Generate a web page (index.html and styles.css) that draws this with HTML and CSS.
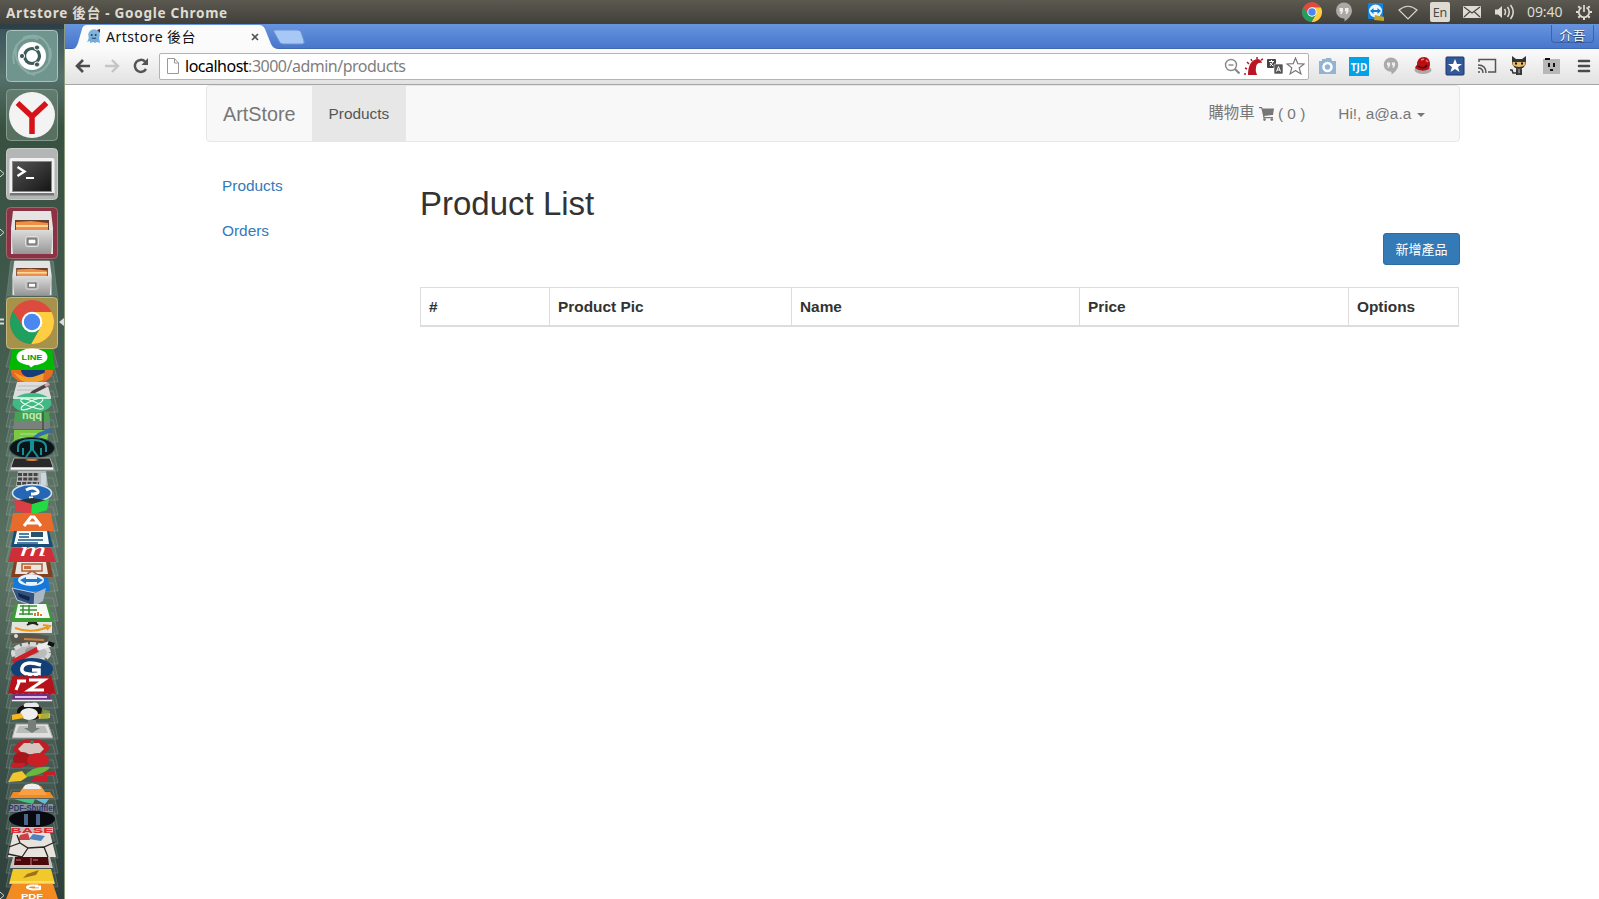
FILE: index.html
```html
<!DOCTYPE html>
<html lang="zh-Hant">
<head>
<meta charset="utf-8">
<title>Artstore 後台</title>
<link rel="stylesheet" href="styles.css">
</head>
<body>
<svg width="0" height="0" class="defs">
  <defs>
    <symbol id="chrome" viewBox="-22 -22 44 44">
      <circle r="22" fill="#dd4b3e"/>
      <path d="M0-10H19.6A22 22 0 0 1-1 22L8.7 5Z" fill="#ffcd40"/>
      <path d="M-19-11L-8.7 5L0 10L8.7 5L-1 22A22 22 0 0 1-19-11Z" fill="#1fa05f"/>
      <circle r="10.3" fill="#fff"/><circle r="8.2" fill="#4a87ee"/>
    </symbol>
    <symbol id="quote" viewBox="0 0 20 20">
      <path d="M10 .5a8 8 0 0 1 8 8c0 5-4 8.500-7.500 11V16.500H10a8 8 0 0 1 0-16Z"/>
      <path d="M5.500 6h3.500v3.500L7.500 12H6l1-2.500H5.500ZM11 6h3.500v3.500L13 12h-1.500l1-2.500H11Z" fill="#eee"/>
    </symbol>
    <linearGradient id="cab" x2="0" y2="1"><stop stop-color="#dcdcdc"/><stop offset="1" stop-color="#969696"/></linearGradient>
    <linearGradient id="dark" x2="1" y2="1"><stop stop-color="#555"/><stop offset="1" stop-color="#151515"/></linearGradient>
    <linearGradient id="wall" x2="0" y2="1"><stop stop-color="#39515a"/><stop offset=".06" stop-color="#56716a"/><stop offset=".12" stop-color="#38503f"/><stop offset=".3" stop-color="#40584b"/><stop offset=".5" stop-color="#4c6557"/><stop offset=".62" stop-color="#5b7263"/><stop offset=".8" stop-color="#3d5249"/><stop offset="1" stop-color="#2d403c"/></linearGradient>
  </defs>
</svg>

<header class="panel">
  <div class="panel-title">Artstore 後台 - Google Chrome</div>
  <div class="panel-tray">
    <svg width="20" height="20"><use href="#chrome"/></svg>
    <svg width="20" height="20" fill="#aaa9a6"><use href="#quote"/></svg>
    <svg width="20" height="20" viewBox="0 0 20 20"><rect x="2" y="1" width="15" height="16" rx="1" fill="#1483df"/><circle cx="9.500" cy="9" r="6.500" fill="#eaf5ff"/><path d="M4 9l3.500-3v2h4V6L15 9l-3.500 3v-2h-4v2Z" fill="#1878cc"/><path d="M9 13l9 2v4l-10-1Z" fill="#c6a32b"/></svg>
    <svg width="20" height="20" viewBox="0 0 20 20" fill="none" stroke="#d8d5cc" stroke-width="1.200"><path d="M1 8Q10 .5 19 8L10 17Z"/></svg>
    <span class="lang">En</span>
    <svg width="20" height="20" viewBox="0 0 20 20"><rect x="1" y="4" width="18" height="12" rx="1" fill="#dfdbd2"/><path d="M2 5l8 6 8-6M2 15l6-5.500M18 15l-6-5.500" fill="none" stroke="#4a4944" stroke-width="1.200"/></svg>
    <svg width="22" height="20" viewBox="0 0 22 20"><path d="M1 7.500h3l4-3.500v12l-4-3.500H1Z" fill="#dfdbd2"/><path d="M10.500 7q2 3 0 6M13.500 5q3.500 5 0 10M16.500 3q5.500 7 0 14" fill="none" stroke="#dfdbd2" stroke-width="1.500"/></svg>
    <span class="clock">09:40</span>
    <svg width="20" height="20" viewBox="-10 -10 20 20" fill="none" stroke="#dfdbd2"><path d="M-2.500-4.500A5.200 5.200 0 1 0 2.500-4.500M0-7V0" stroke-width="1.700"/><path d="M-8 0h2.500M8 0h-2.500M0 8V5.500M-5.700 5.700l1.700-1.700M5.700 5.700L4 4M-5.700-5.700l1.500 1.500M5.700-5.700L4.200-4.200" stroke-width="2"/></svg>
  </div>
</header>

<div class="desktop">
<aside class="launcher">
<svg width="65" height="875" viewBox="0 24 65 875" font-family="Liberation Sans, sans-serif" font-weight="bold" text-anchor="middle">
  <rect y="24" width="65" height="875" fill="url(#wall)"/>
  <rect y="24" width="65" height="5" fill="#26343a" opacity=".6"/>
  <path d="M64.500 24V899" stroke="#8d9a78"/>
  <!-- folded tile edges -->
  <g fill="#fff" fill-opacity=".07" stroke="#c8d6cf" stroke-opacity=".22">
    <path d="M11 261H53L58 300H6ZM11 349H53L58 367H6ZM11 362H53L58 382H6ZM11 376H53L58 397H6ZM11 391H53L58 412H6ZM11 405H53L58 427H6ZM11 420H53L58 442H6ZM11 434H53L58 456H6ZM11 449H53L58 471H6ZM11 463H53L58 486H6ZM11 478H53L58 500H6ZM11 492H53L58 515H6ZM11 507H53L58 531H6ZM11 524H53L58 547H6ZM11 540H53L58 562H6ZM11 554H53L58 576H6ZM11 569H53L58 591H6ZM11 583H53L58 606H6ZM11 598H53L58 621H6ZM11 613H53L58 634H6ZM11 627H53L58 648H6ZM11 642H53L58 664H6ZM11 656H53L58 679H6ZM11 671H53L58 694H6ZM11 685H53L58 708H6ZM11 700H53L58 723H6ZM11 715H53L58 739H6ZM11 730H53L58 754H6ZM11 745H53L58 768H6ZM11 760H53L58 783H6ZM11 775H53L58 799H6ZM11 790H53L58 814H6ZM11 805H53L58 829H6ZM11 820H53L58 844H6ZM11 835H53L58 858H6ZM11 850H53L58 873H6ZM11 863H53L58 887H6Z"/>
  </g>
  <!-- dash -->
  <rect x="6.500" y="30.500" width="51" height="51" rx="4" fill="#70958f" stroke="#a9c4c0"/>
  <path d="M14 64C10 44 25 34 38 39M50 48C54 62 43 76 27 73M23 38C40 31 53 43 49 61M17 44C12 60 22 72 35 75" fill="none" stroke="#a7c5c0" stroke-width="2" opacity=".5"/>
  <circle cx="32" cy="56" r="14" fill="#fff"/>
  <circle cx="32" cy="56" r="7.500" fill="none" stroke="#3d5b57" stroke-width="3.200"/>
  <g fill="#3d5b57" stroke="#fff"><circle cx="22" cy="56" r="2.600"/><circle cx="37" cy="47.500" r="2.600"/><circle cx="37" cy="64.500" r="2.600"/></g>
  <!-- browser -->
  <rect x="6.500" y="89.500" width="51" height="51" rx="4" fill="#788f82" fill-opacity=".5" stroke="#849a8f"/>
  <circle cx="32" cy="115" r="23" fill="#f3f3f3"/>
  <path d="M17.500 103L32 116.500L46.500 103M32 115V134" fill="none" stroke="#d7131a" stroke-width="5.500"/>
  <!-- terminal -->
  <rect x="6.500" y="148.500" width="51" height="51" rx="4" fill="#b4b6b5" stroke="#c9cbca"/>
  <rect x="9.500" y="158" width="45" height="37" rx="2" fill="#f1f1f1"/><path d="M10 193h44v2.500H10Z" fill="#777"/>
  <rect x="12.500" y="161.500" width="39" height="30" fill="url(#dark)" stroke="#888"/>
  <path d="M17.500 167l7 4.500-7 4.500" fill="none" stroke="#fff" stroke-width="2.400"/><path d="M26 178h8" stroke="#fff" stroke-width="2"/>
  <!-- files -->
  <rect x="6.500" y="207.500" width="51" height="51" rx="4" fill="#8b3345" stroke="#a96572"/>
  <g id="cabinet"><path d="M13 211H51L53 228V254H11V228Z" fill="#e4e4e4"/><path d="M15 220H49V230H15Z" fill="#69402c"/><path d="M16 222l15-1 17 2v8H16Z" fill="#ed8f44"/><path d="M16 226h32" stroke="#ffd79b" stroke-width="2"/><path d="M11 230H53L51 254H13Z" fill="url(#cab)"/><rect x="25.500" y="236.500" width="13" height="10" rx="2" fill="#aaa" stroke="#e2e2e2"/><rect x="28" y="239" width="8" height="5" fill="#fff" stroke="#555"/></g>
  <path d="M10 261H54L57 296H7Z" fill="#668075" opacity=".6"/>
  <use href="#cabinet" transform="matrix(.93 0 0 .8 2.240 92)"/>
  <!-- chrome -->
  <rect x="6.500" y="297.500" width="51" height="51" rx="4" fill="#a6924a" stroke="#c6b97d"/>
  <use href="#chrome" x="10" y="300" width="44" height="44"/>
  <!-- folded stack -->
  <ellipse cx="32" cy="371" rx="21" ry="13" fill="#e76b20"/><ellipse cx="33" cy="370" rx="12" ry="8" fill="#173c79"/><path d="M14 372q12 8 22 4l8-3-1 7-12 4q-13-3-17-12Z" fill="#f0a02a"/>
  <path d="M12 349.500H52L55 370H9Z" fill="#00b900"/><ellipse cx="32" cy="357" rx="15.500" ry="8.500" fill="#fff"/><path d="M27 363l4 4.500 8-6" fill="#fff"/><text x="32" y="360" font-size="7.500" textLength="21" lengthAdjust="spacingAndGlyphs" fill="#00a000">LINE</text>
  <path d="M17 382H47L51 397H13Z" fill="#ddd"/><path d="M18 386H42M17 390H41" stroke="#bbb"/><path d="M29 394l3-3 13-7 4 2-14 7Z" fill="#444"/><path d="M44 385l4-3 2 3-4 2" fill="#d7a0a4"/>
  <ellipse cx="32" cy="403" rx="19.500" ry="10" fill="#42b883"/><path d="M13 398H51" stroke="#c5e9d7" stroke-width="2"/><g fill="none" stroke="#e5fff2"><ellipse cx="32" cy="404" rx="12" ry="3" transform="rotate(20 32 404)"/><ellipse cx="32" cy="404" rx="12" ry="3" transform="rotate(-25 32 404)"/></g>
  <path d="M15 412H49L50 421H14Z" fill="#49a253"/><text x="32" y="419" font-size="10" fill="#bfe9bd" textLength="20" lengthAdjust="spacingAndGlyphs">nqq</text><path d="M14 421H50V429H13Z" fill="#7a807c"/><path d="M43 412V430" stroke="#333"/>
  <path d="M14 430H49L47 441H18L10 445L14 439Z" fill="#7bc843"/><path d="M20 434H39M19 438H34" stroke="#aee582"/><path d="M33 437l5-4 12-5 2 4-14 5Z" fill="#356da8"/>
  <ellipse cx="32" cy="448" rx="22.500" ry="10.500" fill="#0b1518" stroke="#314c50"/><path d="M18 452V447q0-7 13-7v10l-5 7M46 452V447q0-7-13-7v10l5 7M23 455v-7M41 455v-7" fill="none" stroke="#168f96" stroke-width="2"/>
  <path d="M14 458H50L54 470H10Z" fill="#292929" stroke="#aaa"/><path d="M11 468.500H53" stroke="#f5f5f5" stroke-width="2.500"/><path d="M25 460q7 2 14 0l-4-1h-7Z" fill="#e28637"/>
  <path d="M18 471H46L48 486H16Z" fill="#b5b8b7"/><path d="M18 474.500H39M18 479H39M17 483.500H39" stroke="#444" stroke-width="2.800" stroke-dasharray="4 1.200"/><path d="M41 473h5v12h-5Z" fill="#c7d8df"/>
  <ellipse cx="32" cy="493" rx="19.500" ry="8.500" fill="#2566b5" stroke="#d7e2ef" stroke-width="1.500"/><path d="M26 490q7-4 11 0t-6 4M29 498h4" stroke="#fff" stroke-width="3" fill="none"/>
  <path d="M14 499L32 504L31 515L16 511Z" fill="#dc3e45"/><path d="M32 504L49 499L47 510L31 515Z" fill="#22da43"/><path d="M18 500L32 498L46 500L32 504Z" fill="#2b322f"/>
  <path d="M13 513H51L54 531H10Z" fill="#e86b2b"/><path d="M24 526L31 517h3l7 9M26 523H39" fill="none" stroke="#fff" stroke-width="3"/>
  <path d="M14 531H49L53 547H11Z" fill="#164d78"/><path d="M17 531H47L49 544H14Z" fill="#f5fafc"/><path d="M19 534H29M19 537H29M18 540H43M17 543H38" stroke="#1b5684" stroke-width="1.500"/><path d="M31 532h12v5H31Z" fill="#28516c"/>
  <path d="M12 548H51L56 562H8Z" fill="#d02e36"/><text x="33" y="556" font-family="Liberation Serif, serif" font-style="italic" font-weight="400" font-size="19" textLength="27" lengthAdjust="spacingAndGlyphs" fill="#fff">m</text>
  <path d="M14 562H50L53 577H11Z" fill="#843e20"/><path d="M17 562H46L48 574H15Z" fill="#e9e6df"/><path d="M22 564h20v7H22ZM27 574l5-3 5 3" stroke="#ae6138" stroke-width="1.500" fill="none"/><path d="M24 566h7v3h-7Z" fill="#cf6d3e"/>
  <path d="M14 578H48L50 591H13Z" fill="#1678d9"/><ellipse cx="31" cy="580" rx="13" ry="6" fill="#e7f4ff"/><path d="M20 580l6-3v2h11v-2l6 3-6 4v-2H26v2Z" fill="#2176c6"/>
  <path d="M12 588L35 593L34 606L17 600Z" fill="#35517e" stroke="#bcccdd"/><path d="M35 593L46 588L43 601L34 606Z" fill="#aab7c5"/><path d="M18 593l12 4-1 4-10-4Z" fill="#102949"/>
  <path d="M15 604H48L53 621H11Z" fill="#3a9c36"/><path d="M18 604H46L50 618H15Z" fill="#f5faf3"/><path d="M20 606h17M20 610h17M19 614h17M23 605v10M29 605v10" stroke="#359134" stroke-width="1.500"/><path d="M33 611h10v6H33Z" fill="#fff"/><path d="M35 616v-3M38 616v-4M41 616v-2" stroke="#df792d" stroke-width="2"/>
  <path d="M12 622H52V633H11Z" fill="#e4e4df"/><path d="M27 625q6-4 11 0M28 623h9" fill="none" stroke="#26231f" stroke-width="2"/><path d="M15 628q16 6 33-1M43 625l7 1-3 4" fill="none" stroke="#ef961d" stroke-width="2"/>
  <path d="M10 635q14-4 39 1l-2 7H12Z" fill="#5a554b"/><circle cx="16" cy="636" r="2" fill="#ddd"/><path d="M24 639l20 1" stroke="#cf8036" stroke-width="2"/>
  <ellipse cx="31" cy="653" rx="18" ry="9" fill="#bbb" stroke="#d9d9d9" stroke-width="4" stroke-dasharray="6 2"/><ellipse cx="32" cy="651" rx="7" ry="4" fill="#999"/><path d="M13 662L38 649" stroke="#cb2025" stroke-width="5"/><path d="M37 648L50 644" stroke="#ececec" stroke-width="6"/><path d="M48 643l6 2" stroke="#111" stroke-width="4"/>
  <ellipse cx="32" cy="669" rx="21" ry="11" fill="#123f77"/><path d="M41 665q-17-5-19 3t17 6v-4h-7" fill="none" stroke="#fff" stroke-width="3.500"/>
  <path d="M12 677l3-2 3 2 3-2 3 2 3-2 3 2 3-2 3 2 3-2 3 2 3-2 3 2 3-2L56 695l-3-2-3 2-3-2-3 2-3-2-3 2-3-2-3 2-3-2-3 2-3-2-3 2-3-2-3 2-3-2L8 694Z" fill="#b51219"/><path d="M17 681h9M20 680l-4 10M29 680h15L29 690h15" fill="none" stroke="#fff" stroke-width="3"/>
  <path d="M13 694H49L52 701H12Z" fill="#713187"/><path d="M15 697H47" stroke="#dfc0e9" stroke-width="2"/><path d="M12 700.500H52" stroke="#eee" stroke-width="1.500"/>
  <ellipse cx="30" cy="712" rx="13" ry="8" fill="#111"/><ellipse cx="29" cy="714" rx="9" ry="6" fill="#eee"/><path d="M24 707q-2-5 7-4 8-2 8 4Z" fill="#e9e9e9"/><path d="M12 715l9-2 3 5-12 2ZM38 714l12-1v5l-11 1Z" fill="#f5b71e"/><path d="M42 709l8 2-2 8h-8Z" fill="#8da847" opacity=".7"/>
  <path d="M16 724H48L53 738H12Z" fill="#dfdfdf" stroke="#9c9c9c"/><path d="M19 726H45L48 733H16Z" fill="#b8bbb8"/><path d="M28 720h8v8h4l-8 5-8-5h4Z" fill="#777d7b"/>
  <path d="M13 750q4-11 19-11t18 10l-6 5H18Z" fill="#bd1f27"/><path d="M18 749l6-6h15l5 6-5 5H23Z" fill="#d6c4bf"/><circle cx="32" cy="742" r="2" fill="#467a6d"/>
  <ellipse cx="22" cy="759" rx="9" ry="7" fill="#a5171d"/><ellipse cx="38" cy="760" rx="11" ry="7" fill="#ca2025"/>
  <path d="M11 763h15l-4 5H12ZM35 776h8v-5h12v4h-8v7H31Z" fill="#c81e27"/><path d="M24 777q8-12 26-10-4 7-24 10Z" fill="#67b83d"/><path d="M8 782l5-9 9-2 5 6-6 4Z" fill="#f1c52f"/>
  <path d="M13 792H50L54 798H10Z" fill="#f28a21"/><path d="M24 786H41L47 795H18Z" fill="#f7a144"/><path d="M25 785q7-3 14 0l2 4H23Z" fill="#eee"/>
  <path d="M14 799h21l-2 5-9-2Z" fill="#44c183"/><path d="M35 799h14l-4 5Z" fill="#62bfd7"/><path d="M11 804H53V812H9Z" fill="#aab4bd" opacity=".6"/>
  <ellipse cx="32" cy="819" rx="23" ry="8.500" fill="#080a10"/><path d="M24 814h4v11h-4ZM36 814h4v11h-4Z" fill="#4e6489"/>
  <text x="32" y="811" font-size="9" textLength="47" lengthAdjust="spacingAndGlyphs" fill="#35366e">PDF-Shuffler</text>
  <path d="M13 833H50L56 857H8Z" fill="#e8e4dd"/><path d="M20 835l8-2 2 7H18Z" fill="#cd4044"/><path d="M33 834l12 2-4 5-12-2Z" fill="#4f83bd"/>
  <path d="M9 847l11-4 8 5 16-1 11-5M20 843l-3-8M28 848l-6 9M44 847l4 10M8 854l14 3" fill="none" stroke="#292725" stroke-width="1.300"/>
  <path d="M11 827H53V833H11Z" fill="#cdbcb9"/>
  <text x="32" y="832.500" font-size="8" textLength="43" lengthAdjust="spacingAndGlyphs" fill="#e0252b">BASE</text>
  <path d="M13 857H50L53 868H10Z" fill="#c8c4c0"/><path d="M15 857H48L49 865H14Z" fill="#4d080b"/><path d="M16 860h5M33 860h5M31 858v7" stroke="#d17b77"/>
  <path d="M13 869H51L55 884H9Z" fill="#f1c92a"/><path d="M10 882H54" stroke="#fff0a0"/><path d="M23 878l4-4 12-4-3 5Z" fill="#9d7022"/>
  <path d="M12 884H53L58 899H6Z" fill="#f18b22"/><path d="M38 885.500h-7q-9 2 2 4l7-.500v-2.500h-5" fill="none" stroke="#fff" stroke-width="2"/><text x="32" y="898.500" font-size="7" textLength="22" lengthAdjust="spacingAndGlyphs" fill="#fff">PDF</text>
  <g fill="none" stroke="#d5dbd7"><path d="M0 170l4 3.500-4 3.500M0 229l4 3.500-4 3.500M0 892l4 3.500-4 3.500"/><path d="M0 319.500h4M0 323.500h4" stroke-width="2"/></g><path d="M64 318v8l-5-4Z" fill="#ddd"/>
</svg>
</aside>

<main class="browser">
  <div class="tabstrip">
    <svg class="tab-shape" width="240" height="25" viewBox="0 0 240 25"><path d="M0 25C4 25 5 24 7 19L11 5Q12 1 16 1H188Q192 1 194 5L200 20Q202 25 208 25Z" fill="#fbfbfb"/><path d="M204 6H226Q229 6 230 8L233 17Q234 20 231 20H212Q209 20 208 17L203 8Q202 6 204 6Z" fill="#a7c8f4" stroke="#6d94d1"/></svg>
    <div class="tab-content">
      <svg width="14" height="15" viewBox="0 0 14 15"><circle cx="7" cy="6" r="5.800" fill="#7eb3dd"/><path d="M2 8q-1 4-2 5l3-1v2l3-1 2 1 2-1 3 1-1-6Z" fill="#75acd7"/><path d="M10 1l3-1v4Z" fill="#402830"/><circle cx="4.700" cy="6" r="1" fill="#244562"/><circle cx="8.700" cy="6" r="1" fill="#244562"/><path d="M5 9q2 1 4 0" stroke="#244562" fill="none"/></svg>
      <span class="tab-title">Artstore 後台</span>
      <svg width="8" height="8" viewBox="0 0 8 8"><path d="M1 1l6 6M7 1L1 7" stroke="#555" stroke-width="1.700"/></svg>
    </div>
    <div class="profile">介吾</div>
  </div>

  <div class="toolbar">
    <div class="nav-buttons">
      <svg width="16" height="16" viewBox="0 0 16 16"><path d="M15 8H2.500M8 2L2 8l6 6" fill="none" stroke="#4d4d4d" stroke-width="2.600"/></svg>
      <svg width="16" height="16" viewBox="0 0 16 16"><path d="M1 8H13.500M8 2l6 6-6 6" fill="none" stroke="#c5c5c5" stroke-width="2.400"/></svg>
      <svg width="16" height="16" viewBox="0 0 16 16"><path d="M13 11A6 6 0 1 1 12 3.500" fill="none" stroke="#555" stroke-width="2.500"/><path d="M15 0v7H8.500Z" fill="#555"/></svg>
    </div>
    <div class="omnibox">
      <svg width="12" height="16" viewBox="0 0 12 16"><path d="M.5.500H7.500L11.500 5V15.500H.5ZM7.500.500V5H11.500" fill="#fff" stroke="#999"/></svg>
      <span class="url"><b>localhost</b>:3000/admin/products</span>
      <span class="omni-icons">
        <svg width="17" height="17" viewBox="0 0 17 17" fill="none" stroke="#888"><circle cx="7" cy="7" r="5.500" stroke-width="1.400"/><path d="M4.500 7h5" stroke-width="1.400"/><path d="M11 11l4.500 4.500" stroke-width="2.200"/></svg>
        <svg width="20" height="19" viewBox="0 0 20 19"><path d="M4 18Q4 4 13 2q4 0 5 4-5-1-6 4-1 4 1 8Z" fill="#ba1525"/><path d="M2 17H0M3 12l-2-1M5 7L3 5M8 4L7 2M13 2V0M17 3l2-1" stroke="#ba1525" stroke-width="1.500"/></svg>
        <svg width="16" height="16" viewBox="0 0 16 16"><rect y="1" width="9" height="9" rx="1" fill="#444"/><path d="M2 3.500h5M4.500 2v2M3 8l3-4M3 5l3 3" stroke="#fff"/><rect x="7" y="6" width="9" height="10" rx="1" fill="#555" stroke="#fff" stroke-width=".6"/><path d="M9.500 13.500l2-5 2 5M10 12h3" fill="none" stroke="#fff"/></svg>
        <svg width="19" height="18" viewBox="0 0 19 18"><path d="M9.500 1l2.300 5.700 6.200.3-4.800 3.900 1.700 6-5.400-3.400-5.400 3.400 1.700-6L1 7l6.200-.3Z" fill="#fff" stroke="#777" stroke-width="1.200"/></svg>
      </span>
    </div>
    <div class="extensions">
      <svg width="20" height="20" viewBox="0 0 20 20"><path d="M2 5h3V3h3v1l1-2h5l1 3h4v13H2Z" fill="#91b3d5"/><circle cx="10.500" cy="11" r="4" fill="none" stroke="#fff" stroke-width="2.500"/></svg>
      <span class="tjd">TJD</span>
      <svg width="20" height="20" viewBox="0 0 20 20" fill="#aaa"><use href="#quote" x="1" y="1" width="18" height="18"/></svg>
      <svg width="20" height="20" viewBox="0 0 20 20"><ellipse cx="10" cy="14" rx="8.500" ry="4" fill="#aaa"/><path d="M2 12q1-3 2-3Q4 1 11 1q6 0 6 8l-1 4q-7 4-14-1Z" fill="#b60f15"/><path d="M5 10q6 4 9-1" stroke="#47070a" fill="none" stroke-width="1.500"/><path d="M8 4l3-1M13 4l2 2" stroke="#ef797b" stroke-width="1.500"/></svg>
      <svg width="20" height="20" viewBox="0 0 20 20"><rect x="1" y="1" width="18" height="18" rx="1" fill="#33589a" stroke="#19366b"/><path d="M10 3l2 5h5l-4 3 1.500 5-4.500-3-4.500 3L7 11 3 8h5Z" fill="#fff"/></svg>
      <svg width="20" height="20" viewBox="0 0 20 20" fill="none" stroke="#555" stroke-width="1.500"><path d="M2 6V3.500H18.500V16H11M1 9q8 0 8 8M1 12q5 0 5 5"/><circle cx="2" cy="16" r="1" fill="#555" stroke="none"/></svg>
      <svg width="20" height="20" viewBox="0 0 20 20"><path d="M3 0l4 3h6l4-3v8l-3 4H6L3 8Z" fill="#333"/><path d="M3.500 6h13v3q-6.500 4-13 0Z" fill="#e7bd6b"/><path d="M6 7.500h2M12 7.500h2" stroke="#111" stroke-width="2"/><path d="M7 12h6v7H7Z" fill="#444"/><path d="M7 17H4l-1-3H1M8 14v5M12 14v5" fill="none" stroke="#333" stroke-width="1.500"/><path d="M10 13v4" stroke="#bbb"/></svg>
      <svg width="20" height="20" viewBox="0 0 20 20"><path d="M2 3h17v15H2Z" fill="#b7b7b7"/><path d="M4 2h5v2H4ZM7 7h2v4H7ZM12 7h2v4h-2ZM9 13h3v2H9Z" fill="#111"/></svg>
      <svg width="20" height="20" viewBox="0 0 20 20"><path d="M6 5h10M6 10h10M6 15h10" stroke="#4b4b4b" stroke-width="2.600" stroke-linecap="round"/></svg>
    </div>
  </div>

  <div class="page">
    <nav class="navbar">
      <a class="brand">ArtStore</a><a class="nav-link active">Products</a>
      <div class="nav-right">
        <a class="nav-link cart"><span>購物車</span><svg width="15" height="14" viewBox="0 0 15 14"><path d="M0 0h3l.6 1.500H15l-1 6.500-8.700 1 .3 1H14v1.300H4.300L4 8.500 2.300 1.300H0Z"/><circle cx="5.500" cy="12.600" r="1.300"/><circle cx="12.800" cy="12.600" r="1.300"/></svg> ( 0 )</a>
        <a class="nav-link">Hi!, a@a.a <i class="caret"></i></a>
      </div>
    </nav>
    <div class="row">
      <ul class="side"><li>Products</li><li>Orders</li></ul>
      <section class="content">
        <h2>Product List</h2>
        <div class="actions"><a class="btn">新增產品</a></div>
        <table>
          <colgroup><col class="c1"><col class="c2"><col class="c3"><col class="c4"><col></colgroup>
          <thead><tr><th>#</th><th>Product Pic</th><th>Name</th><th>Price</th><th>Options</th></tr></thead>
        </table>
      </section>
    </div>
  </div>
</main>
</div>
</body>
</html>
```

FILE: styles.css
```css
* { box-sizing: border-box; }
body {
  margin: 0;
  width: 1599px;
  height: 899px;
  overflow: hidden;
  background: #fff;
  font-family: "Liberation Sans", "Noto Sans CJK TC", sans-serif;
}
svg { display: block; flex: none; }
.defs { position: absolute; }

.panel {
  height: 24px;
  display: flex;
  align-items: center;
  justify-content: space-between;
  padding: 0 5px 0 6px;
  background: linear-gradient(#5b5950, #403f3a);
  color: #dfdbd2;
  font-family: "Noto Sans", "Noto Sans CJK TC", sans-serif;
  white-space: nowrap;
}
.panel-title { font-size: 13.600px; font-weight: 700; letter-spacing: .7px; line-height: 25px; }
.panel-tray { display: flex; align-items: center; gap: 12px; }
.lang {
  width: 20px;
  height: 20px;
  border-radius: 2px;
  background: #dfdbd2;
  color: #4a4944;
  font-size: 12.500px;
  line-height: 21px;
  text-align: center;
}
.clock { width: 36px; margin: 0 -1px 0 -1px; font-size: 14px; line-height: 24px; letter-spacing: -.1px; }

.desktop { display: flex; height: 875px; }
.launcher { width: 65px; flex: none; overflow: hidden; }
.browser { flex: 1; min-width: 0; }

.tabstrip {
  position: relative;
  display: flex;
  justify-content: space-between;
  height: 25px;
  background: linear-gradient(#6694df, #4775ca);
  box-shadow: inset 0 -1px #4169b0;
}
.tab-shape { position: absolute; left: 6px; top: 0; }
.tab-content {
  position: relative;
  display: flex;
  align-items: center;
  width: 194px;
  height: 25px;
  padding-left: 22px;
  font-family: "Noto Sans", "Noto Sans CJK TC", sans-serif;
  font-size: 14px;
  letter-spacing: .45px;
}
.tab-title { flex: 1; margin-left: 5px; line-height: 25px; color: #111; white-space: nowrap; }
.profile {
  width: 43px;
  height: 18px;
  margin: 1px 5px 0 0;
  border: 1px solid #3c62a9;
  border-top: 0;
  border-radius: 0 0 4px 4px;
  color: #fff;
  font: 13px/20px "Noto Sans CJK TC", sans-serif;
  text-align: center;
  text-shadow: 0 1px 1px #234;
}

.toolbar {
  display: flex;
  align-items: center;
  height: 36px;
  padding: 0 6px 1px 10px;
  background: linear-gradient(#fbfbfb, #e2e2e2);
  border-bottom: 1px solid #a6a6a6;
}
.nav-buttons { display: flex; gap: 13px; margin-right: 10px; }
.omnibox {
  display: flex;
  align-items: center;
  width: 1150px;
  height: 27px;
  padding: 0 3px 0 7px;
  background: #fff;
  border: 1px solid #b3b3b3;
  border-radius: 2px;
}
.url {
  flex: 1;
  margin-left: 6px;
  color: #808080;
  font: 16px/25px "Noto Sans", sans-serif;
  letter-spacing: -.5px;
}
.url b { color: #000; font-weight: 400; }
.omni-icons { display: flex; align-items: center; gap: 3px; }
.extensions { display: flex; align-items: center; gap: 12px; margin-left: auto; }
.tjd {
  width: 20px;
  height: 19px;
  background: #00a2e8;
  color: #fff;
  font: bold 10px/20px "Noto Sans", sans-serif;
  text-align: center;
}

.page { padding: 0 139px 0 141px; font-size: 15.400px; color: #333; }
.navbar {
  display: flex;
  height: 57px;
  background: #f8f8f8;
  border: 1px solid #e7e7e7;
  border-radius: 4px;
}
.brand { width: 105px; padding-left: 16px; font-size: 19.800px; line-height: 56px; color: #777; }
.nav-link { display: flex; align-items: center; padding: 0 16.500px; height: 55px; color: #777; white-space: pre; }
.nav-link svg { fill: #777; }
.nav-link.active { background: #e7e7e7; color: #555; }
.cart span { margin-right: 4px; line-height: 20px; padding-bottom: 1px; }
.nav-right { display: flex; margin-left: auto; padding-right: 17px; }
.caret { margin: 2px 1px 0 1px; border: 4px solid transparent; border-top-color: #777; border-bottom: 0; }
.row { display: flex; }
.side { width: 214px; margin: 22px 0 0; padding: 11px 0 0 16px; list-style: none; color: #337ab7; }
.side li { height: 45px; line-height: 22px; }
.content { width: 1040px; }
h2 { margin: 43px 0 11px; font-size: 33px; font-weight: 400; line-height: 37px; }
.actions { display: flex; justify-content: flex-end; }
.btn {
  width: 77px;
  height: 32px;
  background: #337ab7;
  border: 1px solid #2e6da4;
  border-radius: 3px;
  color: #fff;
  font-size: 13px;
  line-height: 31px;
  text-align: center;
}
table {
  width: 1039px;
  margin-top: 22px;
  border-collapse: collapse;
  table-layout: fixed;
}
th {
  height: 38px;
  padding: 1px 8px 0;
  border: 1px solid #ddd;
  border-bottom-width: 2px;
  text-align: left;
}
.c1 { width: 129px; }
.c2 { width: 242px; }
.c3 { width: 288px; }
.c4 { width: 269px; }
```
